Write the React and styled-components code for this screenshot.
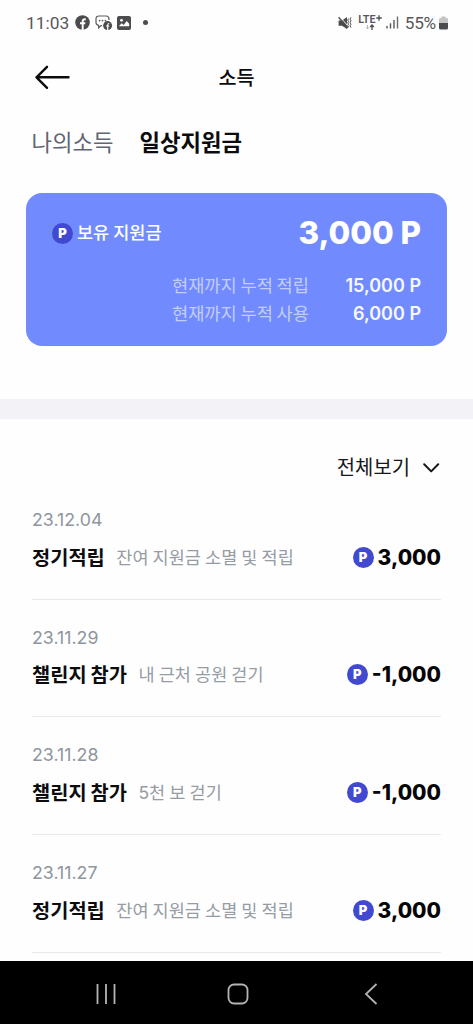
import React from "react";
import styled, { createGlobalStyle } from "styled-components";

const GlobalStyle = createGlobalStyle`
  * { box-sizing: border-box; }
  body {
    margin: 0;
    background: #fefefe;
    font-family: Inter, "Noto Sans CJK KR", sans-serif;
    color: #0c0c0e;
  }
`;

const Screen = styled.div`
  width: 473px;
  height: 1024px;
  display: flex;
  flex-direction: column;
  overflow: hidden;
  background: #fefefe;
`;

const StatusBar = styled.div`
  height: 46px;
  flex: none;
  display: flex;
  align-items: center;
  justify-content: space-between;
  padding: 0 25px 1px 26px;
  font-family: Roboto, sans-serif;
  font-size: 17.4px;
  color: #58585a;
`;

const StatusGroup = styled.div`
  display: flex;
  align-items: center;
  svg { display: block; flex: none; }
`;

const Clock = styled.span`
  width: 49px;
  white-space: nowrap;
`;

const Battery = styled.span`
  margin-left: 6px;
  margin-right: 3px;
  font-size: 17.2px;
  letter-spacing: -0.2px;
`;

const Network = styled.div`
  display: flex;
  flex-direction: column;
  align-items: center;
  margin-left: 6px;
  width: 25px;
  font-size: 10.8px;
  line-height: 9px;
  font-weight: 600;
  white-space: nowrap;
`;

const NetworkType = styled.div`
  display: flex;
  align-items: flex-start;
  svg { margin-left: 0.5px; }
`;

const Header = styled.header`
  height: 62px;
  flex: none;
  display: grid;
  grid-template-columns: 1fr auto 1fr;
  align-items: center;
  padding: 0 33px;
  svg { display: block; }
`;

const Title = styled.h1`
  margin: 0;
  padding-top: 2px;
  font-size: 19.6px;
  line-height: 28px;
  font-weight: 500;
`;

const Tabs = styled.nav`
  height: 85px;
  flex: none;
  display: flex;
  gap: 26px;
  padding: 20px 31.5px 0;
`;

const Tab = styled.span`
  font-size: 22.3px;
  line-height: 30px;
  font-weight: ${(p) => (p.$active ? 700 : 400)};
  color: ${(p) => (p.$active ? "#0c0c0e" : "#5f6672")};
`;

const Card = styled.section`
  height: 153px;
  flex: none;
  margin: 0 26px;
  padding: 20px 26px 0;
  border-radius: 16px;
  background: #718bff;
  color: #fff;
`;

const Balance = styled.div`
  height: 40px;
  display: flex;
  align-items: center;
  justify-content: space-between;
  margin-bottom: 19px;
`;

const BalanceLabel = styled.div`
  display: flex;
  align-items: center;
  gap: 4px;
  font-size: 17.5px;
  line-height: 24px;
  font-weight: 500;
  word-spacing: -0.6px;
`;

const BalanceValue = styled.strong`
  font-size: 31.4px;
  line-height: 40px;
  font-weight: 800;
`;

const SumRow = styled.div`
  height: 27.5px;
  display: grid;
  grid-template-columns: 1fr 112px;
  align-items: center;
  text-align: right;
  font-size: 17.6px;
  line-height: 27px;
`;

const SumLabel = styled.span`
  color: #c3cdfb;
  font-weight: 400;
  word-spacing: -1.2px;
`;

const SumValue = styled.span`
  font-size: 18px;
  font-weight: 600;
  color: #f6f8ff;
`;

const Band = styled.div`
  height: 20px;
  flex: none;
  margin-top: 53px;
  background: #f2f2f7;
`;

const History = styled.section`
  flex: 1;
  min-height: 0;
  overflow: hidden;
  padding: 33px 32px 0;
`;

const Filter = styled.div`
  height: 30px;
  padding-top: 1px;
  display: flex;
  align-items: center;
  justify-content: flex-end;
  gap: 13px;
  font-size: 19.9px;
  line-height: 30px;
  color: #17171a;
  svg { display: block; }
`;

const Entry = styled.article`
  height: 117.7px;
  padding-top: 26px;
  border-bottom: 1px solid #e9e9ec;
`;

const EntryDate = styled.div`
  font-size: 17.8px;
  line-height: 24px;
  color: #8f969e;
`;

const EntryRow = styled.div`
  height: 30px;
  margin-top: 10px;
  display: flex;
  align-items: center;
  line-height: 30px;
  white-space: nowrap;
`;

const Kind = styled.span`
  padding-top: 1px;
  font-size: 19.8px;
  font-weight: 600;
  word-spacing: -1px;
`;

const Note = styled.span`
  padding-top: 1px;
  margin-left: 11.5px;
  font-size: 17.5px;
  font-weight: 400;
  word-spacing: -0.8px;
  color: #959ca4;
`;

const Amount = styled.div`
  margin-left: auto;
  display: flex;
  align-items: center;
  gap: 4px;
  font-size: 20.9px;
  font-weight: 800;
  color: #050506;
`;

const AmountValue = styled.span`
  padding-top: 1px;
`;

const Coin = styled.span`
  width: 21px;
  height: 21px;
  border-radius: 50%;
  display: flex;
  align-items: center;
  justify-content: center;
  background: #4149d1;
  color: #fff;
  font-size: 13px;
  line-height: 21px;
  font-weight: 900;
`;

const NavBar = styled.footer`
  height: 63px;
  flex: none;
  display: grid;
  grid-template-columns: 22px 22px 14px;
  justify-content: space-between;
  align-items: center;
  padding: 2px 95px 0;
  background: #000;
  svg { display: block; }
`;

const entries = [
  { date: "23.12.04", kind: "정기적립", note: "잔여 지원금 소멸 및 적립", amount: "3,000" },
  { date: "23.11.29", kind: "챌린지 참가", note: "내 근처 공원 걷기", amount: "-1,000" },
  { date: "23.11.28", kind: "챌린지 참가", note: "5천 보 걷기", amount: "-1,000" },
  { date: "23.11.27", kind: "정기적립", note: "잔여 지원금 소멸 및 적립", amount: "3,000" },
];

const FacebookIcon = () => (
  <svg width="15" height="15" viewBox="0 0 15 15">
    <circle cx="7.5" cy="7.5" r="7.3" fill="#4c4c4e" />
    <path d="M7.7 15V6.4Q7.7 4.2 9.9 4.2H10.8M5 8.2h5.3" fill="none" stroke="#fefefe" strokeWidth="1.9" />
  </svg>
);

const ChatSvg = styled.svg`
  margin-left: 5px;
`;

const ChatIcon = () => (
  <ChatSvg width="18" height="16" viewBox="0 0 18 16">
    <path d="M7 10.6H6L3.6 12.8V10.4Q1 9.8 1 7.5V4Q1 1 4 1h7q3 0 3 3v1" fill="none" stroke="#5c5c5e" strokeWidth="1.2" />
    <g fill="#5c5c5e"><circle cx="4.6" cy="5.6" r=".9" /><circle cx="7.5" cy="5.6" r=".9" /><circle cx="10.4" cy="5.6" r=".9" /></g>
    <circle cx="12.6" cy="10.6" r="4.5" fill="#4c4c4e" />
    <path d="M12.7 15V10Q12.7 8.5 14.3 8.5M11 11h3.3" fill="none" stroke="#fefefe" strokeWidth="1.2" />
  </ChatSvg>
);

const PictureSvg = styled.svg`
  margin-left: 4px;
`;

const PictureIcon = () => (
  <PictureSvg width="14" height="14" viewBox="0 0 14 14">
    <rect width="14" height="14" rx="2" fill="#4c4c4e" />
    <circle cx="4.5" cy="4.3" r="1.4" fill="#fefefe" />
    <path d="M1.8 10.3 4.7 7.2 6.7 9l3-4 2.5 2.8v2.5z" fill="#fefefe" />
  </PictureSvg>
);

const MoreDot = styled.span`
  width: 5px;
  height: 5px;
  margin-left: 12px;
  border-radius: 50%;
  background: #4c4c4e;
`;

const MuteIcon = () => (
  <svg width="14" height="14" viewBox="0 0 14 14">
    <path d="M.6 4.4h3.4L9 .9v12L4 9.8H.6z" fill="#4c4c4e" />
    <path d="M1.6 .6 10.6 10.6" stroke="#fefefe" strokeWidth="1" />
    <path d="M.6 1.2 10 12" stroke="#4c4c4e" strokeWidth="1.3" />
    <path d="M10.6 2.6l-.9 1.4.9 1.4-.9 1.4.9 1.4-.9 1.4.9 1.4M13 1.4l-1 1.7 1 1.7-1 1.7 1 1.7-1 1.7 1 1.7" fill="none" stroke="#4c4c4e" strokeWidth="1" />
  </svg>
);

const DataArrows = () => (
  <svg width="10" height="6" viewBox="0 0 10 6">
    <path d="M2.5 1v4M1 3.3l1.5 1.7L4 3.3" fill="none" stroke="#b5b5b7" strokeWidth="1" />
    <path d="M7 6V1.4M5.2 3 7 1l1.8 2" fill="none" stroke="#4c4c4e" strokeWidth="1.3" />
  </svg>
);

const SignalSvg = styled.svg`
  margin-left: 3px;
`;

const SignalIcon = () => (
  <SignalSvg width="13" height="13" viewBox="0 0 13 13">
    <path d="M1 10v2.5M4.5 7.3v5.2M8 4v8.5" stroke="#58585a" strokeWidth="1.4" />
    <path d="M11.5.5v12" stroke="#6c6c70" strokeWidth="1.4" />
  </SignalSvg>
);

const BatteryIcon = () => (
  <svg width="9" height="14" viewBox="0 0 9 14">
    <path d="M0 3.2Q0 2 1.2 2H2.4V.6h4.2V2h1.2Q9 2 9 3.2V7H0z" fill="#c4c4c6" />
    <path d="M0 7h9v5q0 1.6-1.6 1.6H1.6Q0 13.6 0 12z" fill="#4c4c4e" />
  </svg>
);

const HomeSvg = styled.svg`
  justify-self: center;
  margin-left: -6px;
`;

export default function App() {
  return (
    <Screen>
      <GlobalStyle />
      <StatusBar>
        <StatusGroup>
          <Clock>11:03</Clock>
          <FacebookIcon />
          <ChatIcon />
          <PictureIcon />
          <MoreDot />
        </StatusGroup>
        <StatusGroup>
          <MuteIcon />
          <Network>
            <NetworkType>
              LTE
              <svg width="6" height="6" viewBox="0 0 6 6" stroke="#4c4c4e" strokeWidth="1.3">
                <path d="M3 .3v5.4M.3 3h5.4" />
              </svg>
            </NetworkType>
            <DataArrows />
          </Network>
          <SignalIcon />
          <Battery>55%</Battery>
          <BatteryIcon />
        </StatusGroup>
      </StatusBar>

      <Header>
        <svg width="38" height="26" viewBox="0 0 38 26" fill="none" stroke="#0c0c0e" strokeWidth="2.4" strokeLinecap="round" strokeLinejoin="round">
          <path d="M35.5 13.3H3.5M14 2.8 3.5 13.3 14 23.8" />
        </svg>
        <Title>소득</Title>
      </Header>

      <Tabs>
        <Tab>나의소득</Tab>
        <Tab $active>일상지원금</Tab>
      </Tabs>

      <Card>
        <Balance>
          <BalanceLabel>
            <Coin>P</Coin>
            보유 지원금
          </BalanceLabel>
          <BalanceValue>3,000 P</BalanceValue>
        </Balance>
        <SumRow>
          <SumLabel>현재까지 누적 적립</SumLabel>
          <SumValue>15,000 P</SumValue>
        </SumRow>
        <SumRow>
          <SumLabel>현재까지 누적 사용</SumLabel>
          <SumValue>6,000 P</SumValue>
        </SumRow>
      </Card>

      <Band />

      <History>
        <Filter>
          전체보기
          <svg width="18" height="12" viewBox="0 0 18 12" fill="none" stroke="#17171a" strokeWidth="2" strokeLinecap="round" strokeLinejoin="round">
            <path d="M1.2 2.2l7 7.2 7-7.2" />
          </svg>
        </Filter>
        {entries.map((e) => (
          <Entry key={e.date}>
            <EntryDate>{e.date}</EntryDate>
            <EntryRow>
              <Kind>{e.kind}</Kind>
              <Note>{e.note}</Note>
              <Amount>
                <Coin>P</Coin>
                <AmountValue>{e.amount}</AmountValue>
              </Amount>
            </EntryRow>
          </Entry>
        ))}
      </History>

      <NavBar>
        <svg width="22" height="20" viewBox="0 0 22 20" stroke="#b4b4b4" strokeWidth="1.8">
          <path d="M2.5 0v20M11 0v20M19.5 0v20" />
        </svg>
        <HomeSvg width="22" height="22" viewBox="0 0 22 22" fill="none" stroke="#b4b4b4" strokeWidth="1.8">
          <rect x="1.5" y="1.5" width="19" height="19" rx="5.5" />
        </HomeSvg>
        <svg width="14" height="22" viewBox="0 0 14 22" fill="none" stroke="#b4b4b4" strokeWidth="1.8">
          <path d="M12.5 1 2 11l10.5 10" />
        </svg>
      </NavBar>
    </Screen>
  );
}
